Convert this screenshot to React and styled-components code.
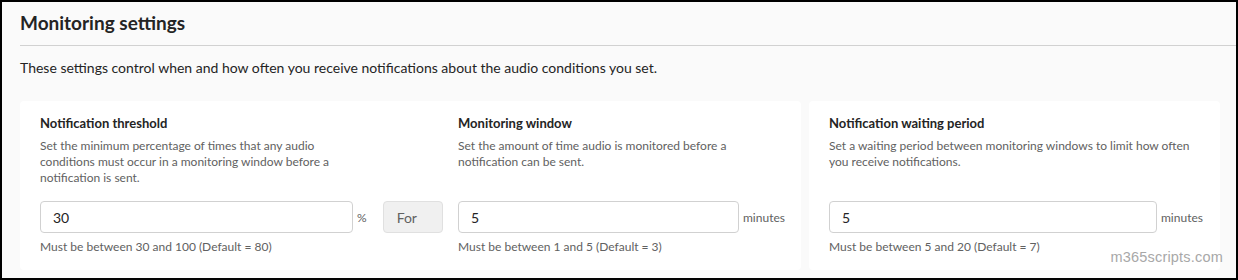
import React from "react";
import styled, { createGlobalStyle } from "styled-components";

const Global = createGlobalStyle`
  html, body { margin: 0; padding: 0; background: #fafafa; }
  * { box-sizing: border-box; }
  body { font-family: Lato, "Open Sans", sans-serif; }
`;

const Frame = styled.div`
  position: relative;
  width: 1238px;
  height: 280px;
  border: 2px solid #000;
  background: #fafafa;
  padding: 9px 0 0 18px;
  color: #242424;
  overflow: hidden;
`;

const Title = styled.h2`
  margin: 0;
  font-size: 19px;
  font-weight: 700;
  line-height: 24px;
  color: #242424;
`;

const Divider = styled.hr`
  margin: 10px 0 0 0;
  border: none;
  border-top: 1px solid #d1d1d1;
`;

const Intro = styled.p`
  margin: 12px 0 0 0;
  font-size: 14px;
  line-height: 20px;
  color: #242424;
`;

const Panels = styled.div`
  display: flex;
  gap: 8px;
  margin-top: 23px;
`;

const Panel = styled.section`
  background: #fff;
  border-radius: 4px;
  display: flex;
  gap: ${(p) => p.$gap || 0}px;
  padding: 14px 16px 15px 20px;
  width: ${(p) => p.$width}px;
`;

const Field = styled.div`
  display: flex;
  flex-direction: column;
  width: ${(p) => p.$width}px;
`;

const Label = styled.div`
  font-size: 13px;
  font-weight: 700;
  line-height: 16px;
  color: #242424;
`;

const Desc = styled.div`
  margin-top: 7px;
  font-size: 12px;
  line-height: 16px;
  color: #616161;
  height: 48px;
  max-width: ${(p) => (p.$max ? `${p.$max}px` : "none")};
`;

const InputRow = styled.div`
  display: flex;
  align-items: center;
  margin-top: 15px;
  height: 32px;
`;

const Input = styled.div`
  width: ${(p) => p.$width}px;
  height: 32px;
  border: 1px solid #d1d1d1;
  border-radius: 4px;
  background: #fff;
  padding-left: 12px;
  display: flex;
  align-items: center;
  font-size: 14px;
  color: #242424;
`;

const Unit = styled.span`
  margin-left: 4px;
  font-size: 12px;
  color: #616161;
`;

const ForBox = styled.div`
  margin-left: 16px;
  width: 60px;
  height: 32px;
  border: 1px solid #e0e0e0;
  border-radius: 4px;
  background: #f0f0f0;
  color: #616161;
  font-size: 14px;
  display: flex;
  align-items: center;
  padding-left: 13px;
`;

const Help = styled.div`
  margin-top: 6px;
  font-size: 12px;
  line-height: 16px;
  color: #616161;
`;

const Watermark = styled.div`
  position: absolute;
  right: 13px;
  bottom: 13px;
  font-family: "Liberation Sans", Arial, sans-serif;
  font-size: 14.5px;
  color: #a8a8a8;
  letter-spacing: 0.2px;
`;

export default function App() {
  return (
    <>
      <Global />
      <Frame>
        <Title>Monitoring settings</Title>
        <Divider />
        <Intro>
          These settings control when and how often you receive notifications about the audio conditions you set.
        </Intro>
        <Panels>
          <Panel $width={781} $gap={15}>
            <Field $width={403}>
              <Label>Notification threshold</Label>
              <Desc $max={327}>
                Set the minimum percentage of times that any audio conditions must occur in a monitoring window before a
                notification is sent.
              </Desc>
              <InputRow>
                <Input $width={313}>30</Input>
                <Unit>%</Unit>
                <ForBox>For</ForBox>
              </InputRow>
              <Help>Must be between 30 and 100 (Default = 80)</Help>
            </Field>
            <Field $width={327}>
              <Label>Monitoring window</Label>
              <Desc>Set the amount of time audio is monitored before a notification can be sent.</Desc>
              <InputRow>
                <Input $width={281}>5</Input>
                <Unit>minutes</Unit>
              </InputRow>
              <Help>Must be between 1 and 5 (Default = 3)</Help>
            </Field>
          </Panel>
          <Panel $width={411}>
            <Field $width={374}>
              <Label>Notification waiting period</Label>
              <Desc>
                Set a waiting period between monitoring windows to limit how often you receive notifications.
              </Desc>
              <InputRow>
                <Input $width={328}>5</Input>
                <Unit>minutes</Unit>
              </InputRow>
              <Help>Must be between 5 and 20 (Default = 7)</Help>
            </Field>
          </Panel>
        </Panels>
        <Watermark>m365scripts.com</Watermark>
      </Frame>
    </>
  );
}
